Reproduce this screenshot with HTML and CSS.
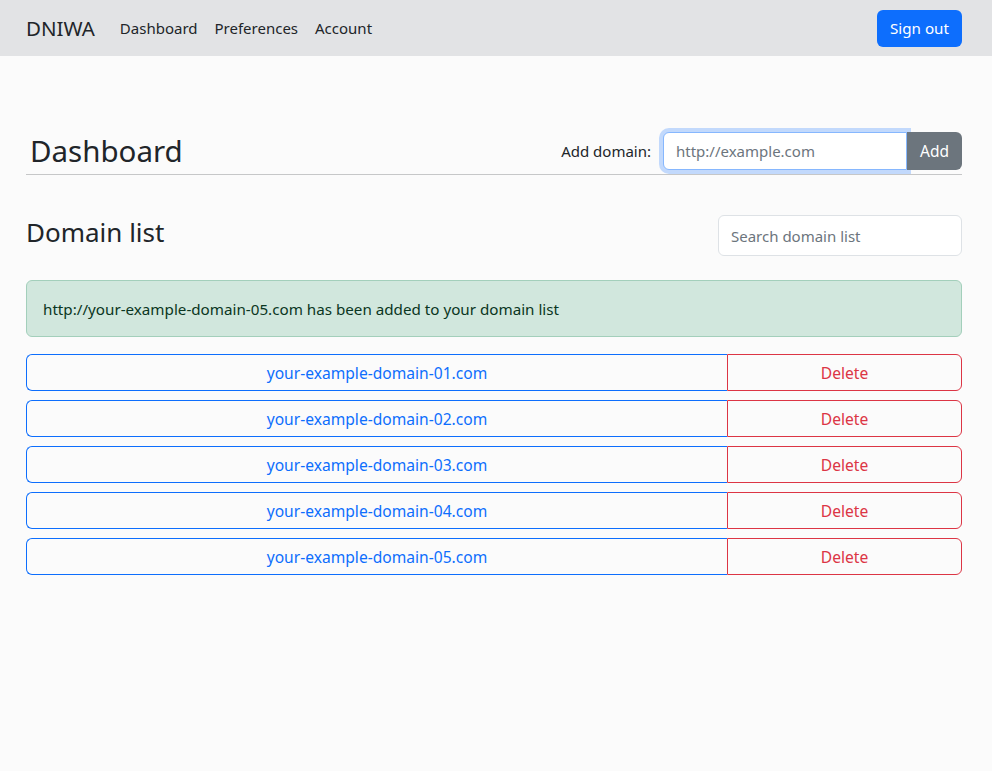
FILE: index.html
```html
<!DOCTYPE html>
<html>
<head>
<meta charset="utf-8">
<link rel="stylesheet" href="styles.css">
</head>
<body>
<nav class="navbar">
  <div class="nav-left">
    <span class="brand">DNIWA</span>
    <a class="nav-link">Dashboard</a>
    <a class="nav-link">Preferences</a>
    <a class="nav-link">Account</a>
  </div>
  <button class="btn-signout">Sign out</button>
</nav>
<main class="container">
  <div class="dash-header">
    <h1 class="dash-title">Dashboard</h1>
    <div class="add-form">
      <label class="add-label">Add domain:</label>
      <div class="input-group">
        <input class="add-input" placeholder="http://example.com">
        <button class="btn-add">Add</button>
      </div>
    </div>
  </div>
  <div class="list-header">
    <h2 class="list-title">Domain list</h2>
    <input class="search-input" placeholder="Search domain list">
  </div>
  <div class="alert">http://your-example-domain-05.com has been added to your domain list</div>
  <div class="domain-list">
    <div class="row"><a class="domain">your-example-domain-01.com</a><a class="delete">Delete</a></div>
    <div class="row"><a class="domain">your-example-domain-02.com</a><a class="delete">Delete</a></div>
    <div class="row"><a class="domain">your-example-domain-03.com</a><a class="delete">Delete</a></div>
    <div class="row"><a class="domain">your-example-domain-04.com</a><a class="delete">Delete</a></div>
    <div class="row"><a class="domain">your-example-domain-05.com</a><a class="delete">Delete</a></div>
  </div>
</main>
</body>
</html>
```
FILE: styles.css
```css
* { box-sizing: border-box; }
body {
  margin: 0;
  background: #fbfbfb;
  font-family: "Noto Sans", "Open Sans", sans-serif;
  font-size: 16px;
  color: #212529;
}
.navbar {
  height: 56px;
  background: #e2e3e5;
  display: flex;
  align-items: center;
  justify-content: space-between;
  padding: 0 30px 0 26px;
}
.nav-left { display: flex; align-items: center; }
.brand { font-size: 20.5px; margin-right: 25px; color: #212529; }
.nav-link { margin-right: 17px; color: #212529; font-size: 15px; }
.btn-signout {
  background: #0d6efd;
  color: #fff;
  border: none;
  border-radius: 6px;
  font: inherit;
  font-size: 15.2px;
  width: 85px;
  height: 37px;
}
.container { padding: 0 30px 0 26px; }
.dash-header {
  margin-top: 76px;
  display: flex;
  justify-content: space-between;
  border-bottom: 1px solid #c6c7c8;
  height: 43px;
  padding-bottom: 4px;
  align-items: flex-end;
}
.dash-title {
  margin: 0 0 0 4px;
  font-size: 29.5px;
  font-weight: 400;
  line-height: 38px;
}
.add-form { display: flex; align-items: center; }
.add-label { margin-right: 12px; font-size: 15px; }
.input-group { display: flex; height: 38px; }
.add-input {
  width: 244px;
  border: 1px solid #86b7fe;
  border-radius: 6px 0 0 6px;
  box-shadow: 0 0 0 4px #c2d9fc;
  font: inherit;
  font-size: 15px;
  padding: 0 12px;
  background: #fff;
  outline: none;
}
.add-input::placeholder { color: #6c757d; }
.btn-add {
  width: 55px;
  background: #6c757d;
  color: #fff;
  border: none;
  border-radius: 0 6px 6px 0;
  font: inherit;
  font-size: 15.5px;
}
.list-header {
  margin-top: 40px;
  display: flex;
  align-items: center;
  justify-content: space-between;
}
.list-title {
  margin: 0 0 7px 0;
  font-size: 26px;
  font-weight: 400;
  line-height: 34px;
}
.search-input {
  width: 244px;
  height: 41px;
  border: 1px solid #dee2e6;
  border-radius: 6px;
  padding: 0 12px;
  font: inherit;
  font-size: 15px;
  background: #fff;
}
.search-input::placeholder { color: #6c757d; }
.alert {
  margin-top: 24px;
  background: #d1e7dd;
  border: 1px solid #a3cfbb;
  color: #0a3622;
  border-radius: 6px;
  height: 57px;
  padding: 0 16px;
  display: flex;
  align-items: center;
  font-size: 15.2px;
}
.domain-list { margin-top: 17px; display: flex; flex-direction: column; gap: 9px; }
.row { display: flex; height: 37px; }
.row a {
  display: flex;
  align-items: center;
  justify-content: center;
  font-size: 15.6px;
}
.domain {
  flex: 0 0 701px;
  border: 1px solid #0d6efd;
  border-right-width: 0;
  border-radius: 6px 0 0 6px;
  color: #0d6efd;
}
.delete {
  flex: 1;
  border: 1px solid #dc3545;
  border-radius: 0 6px 6px 0;
  color: #dc3545;
}
```
